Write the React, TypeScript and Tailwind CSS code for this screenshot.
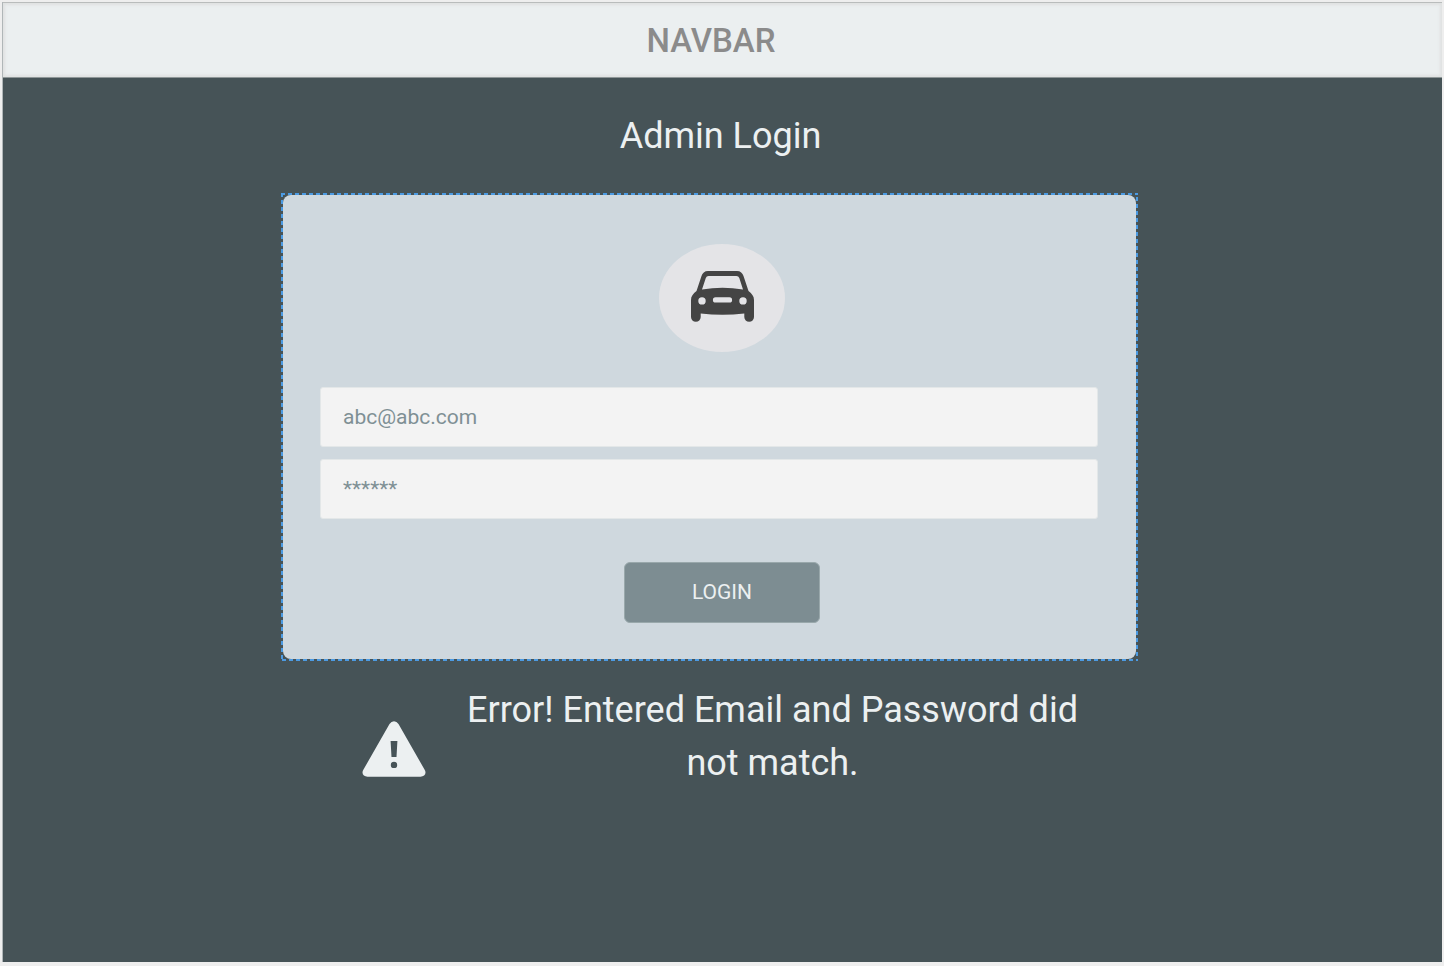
import React from "react";

function CarIcon() {
  return (
    <svg viewBox="0 0 63 51" className="h-[51px] w-[63px]" aria-hidden="true">
      <path
        fill="#444444"
        fillRule="evenodd"
        d="M17 0H46C49.500 0 51.500 2 52.500 5L57.500 20C61 23 63 25 63 29V46A4.800 4.800 0 0 1 53.300 46V42.500Q31.500 45 9.700 42.500V46A4.800 4.800 0 0 1 0 46V29C0 25 2 23 5.500 20L10.500 5C11.500 2 13.500 0 17 0ZM17.500 5Q15.500 5 14.800 7L11 18.500Q31.500 15 52 18.500L48.300 7Q47.500 5 45.500 5ZM11 26.200A3.700 3.700 0 1 0 11 33.600A3.700 3.700 0 1 0 11 26.200ZM52 26.200A3.700 3.700 0 1 0 52 33.600A3.700 3.700 0 1 0 52 26.200ZM24.500 26.300A2.600 2.600 0 0 0 24.500 31.500H38.500A2.600 2.600 0 0 0 38.500 26.300Z"
      />
    </svg>
  );
}

function WarningIcon() {
  return (
    <svg viewBox="0 0 64 56" className="h-14 w-16 shrink-0" aria-hidden="true">
      <path
        fill="#ecf0f1"
        fillRule="evenodd"
        d="M27.500 3Q29.300 0.300 32 0.300T36.500 3L62.500 48.500C65 52.500 62.500 55.700 58.500 55.700H5.500C1.500 55.700 -1 52.500 1.500 48.500ZM28.600 20L29.500 36H34.500L35.400 20ZM32 40.700A3.200 3.200 0 1 0 32 47.100A3.200 3.200 0 1 0 32 40.700Z"
      />
    </svg>
  );
}

// Dashed selection marker drawn over the edge of its parent.
function SelectionOutline() {
  return (
    <svg
      className="pointer-events-none absolute inset-0 h-full w-full"
      aria-hidden="true"
    >
      <rect
        width="100%"
        height="100%"
        fill="none"
        stroke="#4c9be3"
        strokeWidth="4"
        strokeDasharray="4 3"
      />
    </svg>
  );
}

const fieldClass =
  "block h-15 w-full rounded-[3px] border border-[#e3e7e8] bg-[#f3f3f3] px-[22px] text-[21px] text-[#7f9095] outline-none";

export default function App() {
  return (
    <div className="min-h-screen bg-[#eeeeee] px-0.5 pt-0.5 pb-1 font-['Roboto',sans-serif]">
      <div className="flex min-h-[calc(100vh-6px)] flex-col border-l border-[#b0b6b8] bg-[#465357]">
        <header className="flex h-[76px] items-center justify-center border-t border-b border-t-[#b9bcbc] border-b-[#8f9798] bg-[#ebeff0] pt-0.5 pr-[23px] shadow-[inset_0_0_3px_2px_#dfe1e1]">
          <span className="text-[33px] font-medium text-[#8b8b8b]">NAVBAR</span>
        </header>

        <main className="px-4">
          <h1 className="mt-[31px] pr-1 text-center text-4xl leading-[54px] text-[#ecf0f1]">
            Admin Login
          </h1>

          <div className="mt-[30px] pr-[26px]">
            <div className="relative mx-auto w-full max-w-[857px] p-0.5">
              <form
                className="rounded-lg bg-[#cfd8de] pt-[49px] pr-[38px] pb-9 pl-[37px]"
                onSubmit={(e) => e.preventDefault()}
              >
                <div className="flex justify-center pl-[26px]">
                  <div className="flex h-[108px] w-[126px] items-center justify-center rounded-[50%] bg-[#e4e4e7] pb-1">
                    <CarIcon />
                  </div>
                </div>
                <div className="mt-[35px] flex flex-col gap-3">
                  <input
                    type="email"
                    aria-label="Email"
                    defaultValue="abc@abc.com"
                    className={fieldClass}
                  />
                  <input
                    type="text"
                    aria-label="Password"
                    defaultValue="******"
                    className={fieldClass}
                  />
                </div>
                <div className="mt-[43px] flex justify-center pl-[26px]">
                  <button
                    type="submit"
                    className="h-[61px] w-[196px] rounded-md border border-[#99a8ab] bg-[#7d8d92] text-[21px] text-[#ecf0f1]"
                  >
                    LOGIN
                  </button>
                </div>
              </form>
              <SelectionOutline />
            </div>
          </div>

          <div
            role="alert"
            className="mt-[23px] flex justify-center gap-[35px] pl-px"
          >
            <div className="pt-[37px]">
              <WarningIcon />
            </div>
            <p className="w-[624px] text-center text-4xl leading-[53px] text-[#ecf0f1]">
              Error! Entered Email and Password did not match.
            </p>
          </div>
        </main>
      </div>
    </div>
  );
}
